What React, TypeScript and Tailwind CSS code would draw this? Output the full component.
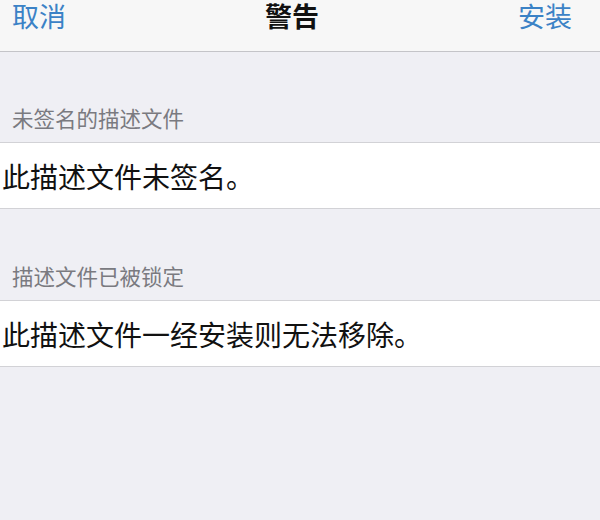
import React from "react";

const font = { fontFamily: '"Noto Sans CJK SC", "Noto Sans", sans-serif' };

export default function App() {
  return (
    <div className="w-[600px] h-[520px] bg-[#efeff4] overflow-hidden flex flex-col" style={font}>
      <div className="h-[52px] shrink-0 bg-[#f7f7f7] border-b border-[#c4c4c8] flex items-start justify-between pl-[12px] pr-[28px]">
        <span className="text-[27px] leading-[31px] text-[#3b82c6]">取消</span>
        <span className="text-[27px] leading-[31px] font-bold text-[#111111]">警告</span>
        <span className="text-[27px] leading-[31px] text-[#3b82c6]">安装</span>
      </div>
      <div className="pt-[54px] pb-[12px] pl-[12px] text-[21.5px] leading-[24px] text-[#7a7a80]">未签名的描述文件</div>
      <div className="h-[67px] bg-white border-y border-[#d2d2d6] flex items-center pl-[2px] text-[28px] text-[#111111]">此描述文件未签名。</div>
      <div className="pt-[55px] pb-[12px] pl-[12px] text-[21.5px] leading-[24px] text-[#7a7a80]">描述文件已被锁定</div>
      <div className="h-[67px] bg-white border-y border-[#d2d2d6] flex items-center pl-[2px] text-[28px] text-[#111111]">此描述文件一经安装则无法移除。</div>
    </div>
  );
}
